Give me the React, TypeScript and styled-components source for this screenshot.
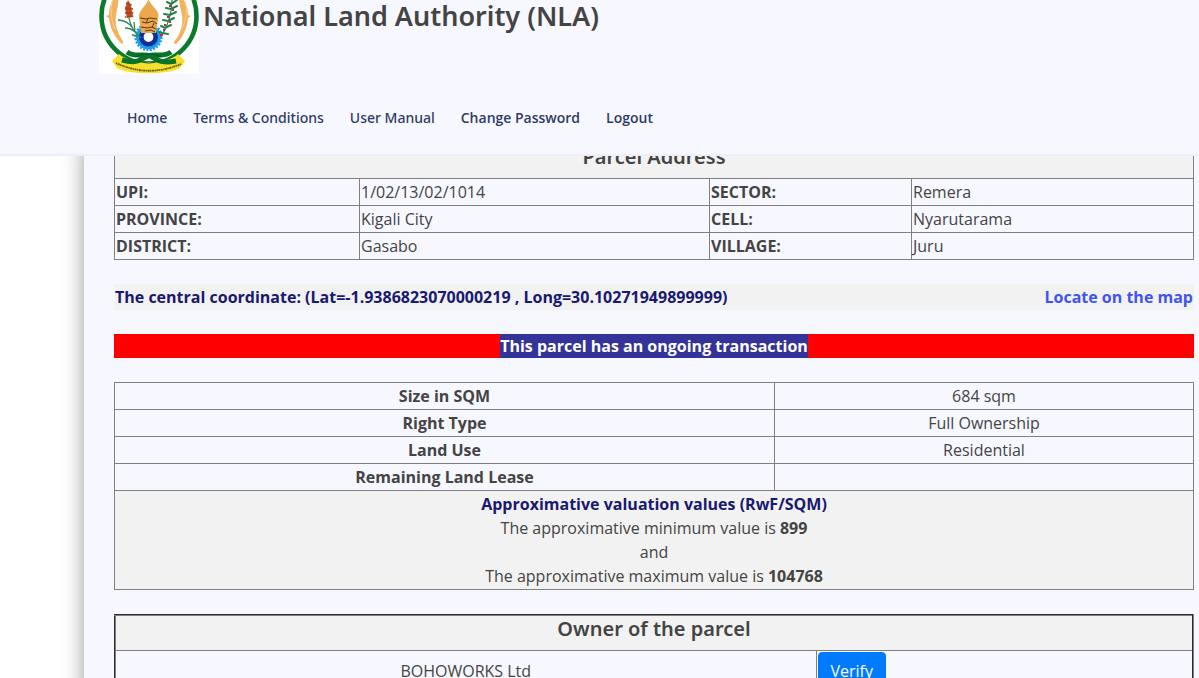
import React from "react";
import styled, { createGlobalStyle } from "styled-components";

const GlobalStyle = createGlobalStyle`
  *, *::before, *::after { box-sizing: border-box; }
  html, body { margin: 0; background: #fff; }
  body {
    font: 400 16px/24px "Open Sans", sans-serif;
    color: #444;
  }
  a { text-decoration: none; }
`;

const Page = styled.div`
  display: flex;
  flex-direction: column;
  height: 100vh;
  overflow: hidden;
`;

const Header = styled.header`
  flex: none;
  padding: 0 98px 24px 99px;
  background: #f7f7ff;
  border-bottom: 2px solid #ededfb;
`;

const Brand = styled.a`
  display: flex;
  align-items: flex-start;
  gap: 4px;
  color: #444;
`;

const SiteTitle = styled.h1`
  margin: 0;
  font: 600 27px/32px "Noto Sans", sans-serif;
`;

const Nav = styled.nav`
  display: flex;
  gap: 26px;
  padding: 32px 28px 0;
`;

const NavLink = styled.a<{ $strong?: boolean }>`
  font: ${(p) => (p.$strong ? '600 14px/24px "Open Sans"' : '500 14px/24px "Noto Sans"')}, sans-serif;
  color: #2f3b66;
`;

const Viewport = styled.div`
  flex: 1;
  min-height: 0;
  overflow: hidden;
  padding-left: 84px;
`;

const Sheet = styled.main`
  display: flex;
  flex-direction: column;
  gap: 24px;
  margin-top: -13px;
  padding: 0 5px 24px 30px;
  background: #f7f7ff;
  box-shadow: 0 0 20px rgba(0, 0, 0, 0.4);
`;

const Table = styled.table<{ $framed?: boolean }>`
  width: 100%;
  table-layout: fixed;
  border-collapse: collapse;
  border: ${(p) => (p.$framed ? "2px groove gray" : "1px solid gray")};
`;

const Col = styled.col<{ $width?: number }>`
  width: ${(p) => (p.$width ? `${p.$width}px` : "auto")};
`;

const Cell = styled.td<{ $center?: boolean }>`
  padding: 1px;
  border: 1px solid gray;
  text-align: ${(p) => (p.$center ? "center" : "left")};
`;

const Label = styled(Cell).attrs({ as: "th" })`
  font-weight: 700;
`;

const Band = styled(Cell)`
  background: #f2f2f2;
`;

const Heading = styled.h2`
  margin: 0 0 8px;
  font: 600 20px/24px "Noto Sans", sans-serif;
`;

const Coordinates = styled.div`
  display: flex;
  justify-content: space-between;
  padding: 1px;
  background: #f2f2f2;
  font-weight: 700;
  color: #191970;
`;

const MapLink = styled.a`
  color: #4154f1;
`;

const Alert = styled.div`
  background: #f00;
  color: #fff;
  font-weight: 700;
  text-align: center;
`;

const Highlight = styled.span`
  display: inline-block;
  background: #333399;
`;

const Navy = styled.strong`
  color: #191970;
`;

const Line = styled.div``;

const VerifyButton = styled.button`
  display: block;
  height: 38px;
  padding: 0 12px;
  border: 1px solid #007bff;
  border-radius: 4px;
  background: #007bff;
  color: #fff;
  font: 400 16px/24px "Open Sans", sans-serif;
`;

const Emblem = () => (
  <svg width="100" height="74" viewBox="0 0 100 74" role="img" aria-label="Rwanda coat of arms">
    <rect width="100" height="74" fill="#fff" />
    <circle cx="50" cy="16" r="47.5" fill="none" stroke="#0b7a2c" strokeWidth="4.6" />
    <path d="M15 -2C11 4 10 10 10 15L7 16L10 18C11 28 16 38 23 44C25 43 24 41 22 38C17 30 16 22 17 15C18 9 20 4 19 -2Z" fill="#f2b35a" />
    <path d="M83 -2C88 4 89 10 89 15L92 16L89 18C88 28 84 38 77 44C74 44 75 41 78 38C83 30 84 22 83 15C82 9 80 4 80 -2Z" fill="#f2b35a" />
    <path d="M13 1Q10 14 16 29M86 1Q90 14 83 29" fill="none" stroke="#fbdca8" strokeWidth=".8" />
    <circle cx="49.500" cy="37" r="12.500" fill="#1d9fe6" />
    <circle cx="49.500" cy="37" r="13" fill="none" stroke="#1d9fe6" strokeWidth="2.400" strokeDasharray="2 1.400" />
    <circle cx="49.500" cy="37" r="7.200" fill="#fff" stroke="#0b2f9e" strokeWidth="4.600" />
    <path d="M49.500 -1C51 5 60 10 59.500 16L57 33H42L40 16C40 10 48 5 49.500 -1Z" fill="#eaa94e" />
    <path d="M41 18L47 19L51 18L58 19M43 22L48 23L54 21L58 24M42 27L48 28L53 27L57 29M46 31L52 30L56 32M49 19L47 23M55 23L53 28" fill="none" stroke="#5f3514" strokeWidth="1" />
    <path d="M29 0L32 5L34 17L28 18L26 8Z" fill="#c14c20" />
    <path d="M27 3L33 5M26 8L34 9M26 13L35 13M26 17L35 16" stroke="#9e3817" strokeWidth="1.400" strokeDasharray="1.500 .7" />
    <path d="M30 18C31 24 35 33 42 38M19 20Q27 20 33 27M26 28Q32 28 36 32M35 22L36 32M33 35L39 36" fill="none" stroke="#30875a" strokeWidth="1.300" />
    <path d="M73 -1C73 12 69 26 62 37" fill="none" stroke="#287c4c" strokeWidth="1.200" />
    <path d="M68 2L72 4L78 0M67 8L72 9L78 6M65 14L71 15L77 12M64 20L69 21L75 18M62 26L66 28L72 25M60 32L63 33L69 34" fill="none" stroke="#23804b" strokeWidth="2" strokeLinecap="round" />
    <path d="M70 6h2M73 10h2M68 17h2M70 22h2M65 25h2M64 30h2M61 35h3" stroke="#cc2444" strokeWidth="2.200" />
    <path d="M13 61L20 54C32 65 68 65 79 54L86 61L81 68C69 75 30 75 18 68Z" fill="#f6e02c" />
    <path d="M17 63Q49 78 82 64" fill="none" stroke="#665f18" strokeWidth="1.800" strokeDasharray="1.300 .6 2 .5" />
    <path d="M28 52C36 58 44 53 51 56C59 60 62 64 77 61M72 52C64 58 56 53 49 56C41 60 38 64 23 60" fill="none" stroke="#08742a" strokeWidth="5" />
    <path d="M36 57Q49 51 63 57M39 61Q50 65 60 61" fill="none" stroke="#0e5423" strokeWidth="1" />
  </svg>
);

const navItems = [
  { text: "Home" },
  { text: "Terms & Conditions" },
  { text: "User Manual" },
  { text: "Change Password", strong: true },
  { text: "Logout", strong: true },
];

const address = [
  ["UPI:", "1/02/13/02/1014", "SECTOR:", "Remera"],
  ["PROVINCE:", "Kigali City", "CELL:", "Nyarutarama"],
  ["DISTRICT:", "Gasabo", "VILLAGE:", "Juru"],
];

const details = [
  ["Size in SQM", "684 sqm"],
  ["Right Type", "Full Ownership"],
  ["Land Use", "Residential"],
  ["Remaining Land Lease", ""],
];

export default function App() {
  return (
    <Page>
      <GlobalStyle />
      <Header>
        <Brand href="#">
          <Emblem />
          <SiteTitle>National Land Authority (NLA)</SiteTitle>
        </Brand>
        <Nav>
          {navItems.map((item) => (
            <NavLink key={item.text} href="#" $strong={item.strong}>
              {item.text}
            </NavLink>
          ))}
        </Nav>
      </Header>
      <Viewport>
        <Sheet>
          <Table>
            <colgroup>
              <Col $width={245} />
              <Col $width={350} />
              <Col $width={202} />
              <Col />
            </colgroup>
            <tbody>
              <tr>
                <Band colSpan={4} $center>
                  <Heading>Parcel Address</Heading>
                </Band>
              </tr>
              {address.map(([a, b, c, d]) => (
                <tr key={a}>
                  <Label scope="row">{a}</Label>
                  <Cell>{b}</Cell>
                  <Label scope="row">{c}</Label>
                  <Cell>{d}</Cell>
                </tr>
              ))}
            </tbody>
          </Table>

          <Coordinates>
            <span>The central coordinate: (Lat=-1.9386823070000219 , Long=30.10271949899999)</span>
            <MapLink href="#">Locate on the map</MapLink>
          </Coordinates>

          <Alert role="alert">
            <Highlight>This parcel has an ongoing transaction</Highlight>
          </Alert>

          <Table>
            <colgroup>
              <Col $width={660} />
              <Col />
            </colgroup>
            <tbody>
              {details.map(([name, value]) => (
                <tr key={name}>
                  <Label scope="row" $center>{name}</Label>
                  <Cell $center>{value}</Cell>
                </tr>
              ))}
              <tr>
                <Band colSpan={2} $center>
                  <Navy>Approximative valuation values (RwF/SQM)</Navy>
                  <Line>The approximative minimum value is <strong>899</strong></Line>
                  <Line>and</Line>
                  <Line>The approximative maximum value is <strong>104768</strong></Line>
                </Band>
              </tr>
            </tbody>
          </Table>

          <Table $framed>
            <colgroup>
              <Col $width={701} />
              <Col />
            </colgroup>
            <tbody>
              <tr>
                <Band colSpan={2} $center>
                  <Heading>Owner of the parcel</Heading>
                </Band>
              </tr>
              <tr>
                <Cell $center>BOHOWORKS Ltd</Cell>
                <Cell>
                  <VerifyButton type="button">Verify</VerifyButton>
                </Cell>
              </tr>
            </tbody>
          </Table>
        </Sheet>
      </Viewport>
    </Page>
  );
}
